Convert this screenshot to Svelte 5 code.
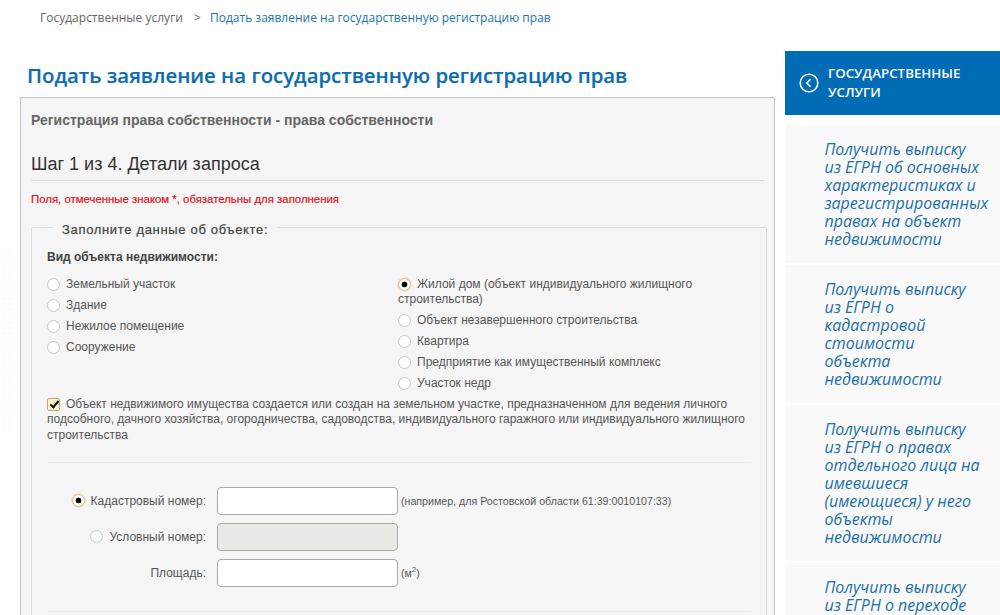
<script>
  const leftTypes = ['Земельный участок', 'Здание', 'Нежилое помещение', 'Сооружение'];
  const rightTypes = ['Объект незавершенного строительства', 'Квартира', 'Предприятие как имущественный комплекс', 'Участок недр'];
  const services = [
    'Получить выписку из ЕГРН об основных характеристиках и зарегистрированных правах на объект недвижимости',
    'Получить выписку из ЕГРН о кадастровой стоимости объекта недвижимости',
    'Получить выписку из ЕГРН о правах отдельного лица на имевшиеся (имеющиеся) у него объекты недвижимости',
    'Получить выписку из ЕГРН о переходе прав на объект недвижимости'
  ];

  let objectType = 'Жилой дом';
  let numberType = 'cadastral';
  let landPlot = true;
</script>

<div class="page">
  <div class="speckle"></div>

  <main class="content">
    <nav class="crumbs">
      <span>Государственные услуги</span>
      <span class="sep">&gt;</span>
      <span class="current">Подать заявление на государственную регистрацию прав</span>
    </nav>

    <h1>Подать заявление на государственную регистрацию прав</h1>

    <section class="panel">
      <div class="panel-title">Регистрация права собственности - права собственности</div>
      <h2>Шаг 1 из 4. Детали запроса</h2>
      <div class="required">Поля, отмеченные знаком *, обязательны для заполнения</div>

      <fieldset>
        <legend><span>Заполните данные об объекте:</span></legend>
        <div class="type-label">Вид объекта недвижимости:</div>

        <div class="types">
          <div class="type-col">
            {#each leftTypes as t}
              <label class="opt"><input type="radio" bind:group={objectType} value={t} />{t}</label>
            {/each}
          </div>
          <div class="type-col">
            <label class="opt wrap"><input type="radio" bind:group={objectType} value="Жилой дом" />Жилой дом (объект индивидуального жилищного строительства)</label>
            {#each rightTypes as t}
              <label class="opt"><input type="radio" bind:group={objectType} value={t} />{t}</label>
            {/each}
          </div>
        </div>

        <label class="check">
          <input type="checkbox" bind:checked={landPlot} />Объект недвижимого имущества создается или создан на земельном участке, предназначенном для ведения личного подсобного, дачного хозяйства, огородничества, садоводства, индивидуального гаражного или индивидуального жилищного строительства
        </label>

        <div class="numbers">
          <label class="num-label"><input type="radio" bind:group={numberType} value="cadastral" />Кадастровый номер:</label>
          <input class="field" type="text" />
          <span class="hint">(например, для Ростовской области 61:39:0010107:33)</span>

          <label class="num-label"><input type="radio" bind:group={numberType} value="conditional" />Условный номер:</label>
          <input class="field" type="text" disabled />
          <span></span>

          <span class="num-label">Площадь:</span>
          <input class="field" type="text" />
          <span class="hint">(м<sup>2</sup>)</span>
        </div>
      </fieldset>
    </section>
  </main>

  <aside class="side">
    <div class="side-head">
      <svg width="20" height="20" viewBox="0 0 20 20" fill="none" stroke="#fff">
        <circle cx="10" cy="10" r="8.8" stroke-width="1.6" />
        <path d="M11.6 6.2 7.8 10l3.8 3.8" stroke-width="1.6" />
      </svg>
      <span>ГОСУДАРСТВЕННЫЕ УСЛУГИ</span>
    </div>
    {#each services as s}
      <a class="side-item" href="#top">{s}</a>
    {/each}
  </aside>
</div>

<style>
  :global(body) {
    background: #fff;
    overflow: hidden;
  }

  .page {
    position: relative;
    display: flex;
    height: 615px;
    overflow: hidden;
    font-family: "Liberation Sans", Arial, sans-serif;
    font-size: 12px;
    color: #555;
  }

  /* faint paper texture down the left margin */
  .speckle {
    position: absolute;
    left: 0;
    top: 250px;
    width: 14px;
    height: 185px;
    background:
      radial-gradient(circle, #f2f2f2 0 0.6px, transparent 1px) 0 0 / 7px 11px,
      radial-gradient(circle, #f6f6f6 0 0.6px, transparent 1px) 2px 3px / 5px 6px;
  }

  .content {
    width: 785px;
    flex: none;
    padding-left: 20px;
    box-sizing: border-box;
  }

  .crumbs {
    font-family: "Open Sans", sans-serif;
    font-size: 12px;
    line-height: 18px;
    padding: 9px 0 0 20px;
    color: #666;
  }

  .sep {
    margin: 0 6px 0 8px;
  }

  .current {
    color: #1a74b0;
  }

  h1 {
    margin: 34px 0 8px 7px;
    font-family: "Open Sans", sans-serif;
    font-size: 20.35px;
    line-height: 28px;
    font-weight: 600;
    color: #0b6cb0;
    -webkit-text-stroke: 0.15px #0b6cb0;
  }

  .panel {
    width: 755px;
    box-sizing: border-box;
    border: 1px solid #c4c4c4;
    background: #f5f5f5;
    padding: 14px 10px 40px;
    height: 560px;
  }

  .panel-title {
    font-size: 14px;
    line-height: 16px;
    font-weight: bold;
    color: #666;
  }

  h2 {
    margin: 24px 0 0;
    font-size: 18px;
    line-height: 24px;
    font-weight: normal;
    color: #333;
    padding-bottom: 4px;
    border-bottom: 1px solid #ddd;
  }

  .required {
    margin-top: 12px;
    font-size: 11.4px;
    line-height: 13px;
    color: #e8101c;
    -webkit-text-stroke: 0.2px #e8101c;
  }

  fieldset {
    margin: 13px 0 0;
    padding: 14px 15px 0;
    border: 1px solid #ddd;
    border-radius: 2px;
    height: 500px;
  }

  legend {
    margin-left: 6px;
    padding: 0 9px;
    font-size: 13px;
    line-height: 16px;
    font-weight: normal;
    letter-spacing: 0.67px;
    color: #444;
    -webkit-text-stroke: 0.2px #444;
  }

  /* the caption sits a little under the border line */
  legend span {
    position: relative;
    top: 3px;
  }

  .type-label {
    font-size: 12px;
    line-height: 16px;
    font-weight: bold;
    color: #444;
  }

  .types {
    display: grid;
    grid-template-columns: 351px 1fr;
    margin-top: 12px;
  }

  .type-col {
    display: flex;
    flex-direction: column;
    gap: 6px;
  }

  .opt {
    display: block;
    line-height: 15px;
  }

  input[type="radio"] {
    appearance: none;
    width: 13px;
    height: 13px;
    margin: 0 6px 0 0;
    vertical-align: -2.5px;
    border-radius: 50%;
    border: 1px solid #c8c8c8;
    background: #fff;
    box-sizing: border-box;
  }

  input[type="radio"]:checked {
    border-color: #d8b98a;
    background: radial-gradient(circle, #000 0 2.6px, #fff 3.2px);
    box-shadow: 0 0 0 1px #f2e3c8;
  }

  .check {
    display: block;
    margin-top: 6px;
    line-height: 15.3px;
    width: 704px;
  }

  input[type="checkbox"] {
    appearance: none;
    width: 13px;
    height: 13px;
    margin: 0 6px 0 0;
    vertical-align: -2.5px;
    border: 1px solid #c9a86e;
    border-radius: 2px;
    background: #fbf0d2;
    box-sizing: border-box;
    position: relative;
  }

  input[type="checkbox"]:checked::after {
    content: "";
    position: absolute;
    left: 3.5px;
    top: 0.5px;
    width: 3px;
    height: 7px;
    border: solid #111;
    border-width: 0 2px 2px 0;
    transform: rotate(40deg);
  }

  .numbers {
    display: grid;
    grid-template-columns: 159px 181px 1fr;
    column-gap: 11px;
    row-gap: 8px;
    align-items: center;
    margin-top: 19px;
    padding: 24px 0;
    border-top: 1px solid #ececec;
    border-bottom: 1px solid #ececec;
  }

  .num-label {
    text-align: right;
    white-space: nowrap;
  }

  .field {
    height: 28px;
    box-sizing: border-box;
    border: 1px solid #a9a9a9;
    border-radius: 4px;
    background: #fff;
    padding: 0 6px;
  }

  .field:disabled {
    background: #e9e8e4;
  }

  .hint {
    margin-left: -8px;
    font-size: 10.65px;
    white-space: nowrap;
  }

  sup {
    font-size: 8px;
    line-height: 0;
  }

  .side {
    width: 215px;
    flex: none;
    padding-top: 51px;
  }

  .side-head {
    display: flex;
    align-items: center;
    gap: 9px;
    height: 64px;
    box-sizing: border-box;
    padding: 0 10px 0 14px;
    margin-bottom: 10px;
    background: #006cb5;
    color: #fff;
    font-family: "Open Sans", sans-serif;
    font-size: 13.3px;
    line-height: 19px;
    font-weight: 600;
  }

  .side-head svg {
    flex: none;
  }

  .side-item {
    display: block;
    box-sizing: border-box;
    margin-bottom: 2px;
    padding: 15px 16px 15px 39.5px;
    background: #f9f9f9;
    font-family: "Open Sans", sans-serif;
    font-size: 16px;
    line-height: 18px;
    font-style: italic;
    color: #1a6fa8;
    text-decoration: none;
  }
</style>
